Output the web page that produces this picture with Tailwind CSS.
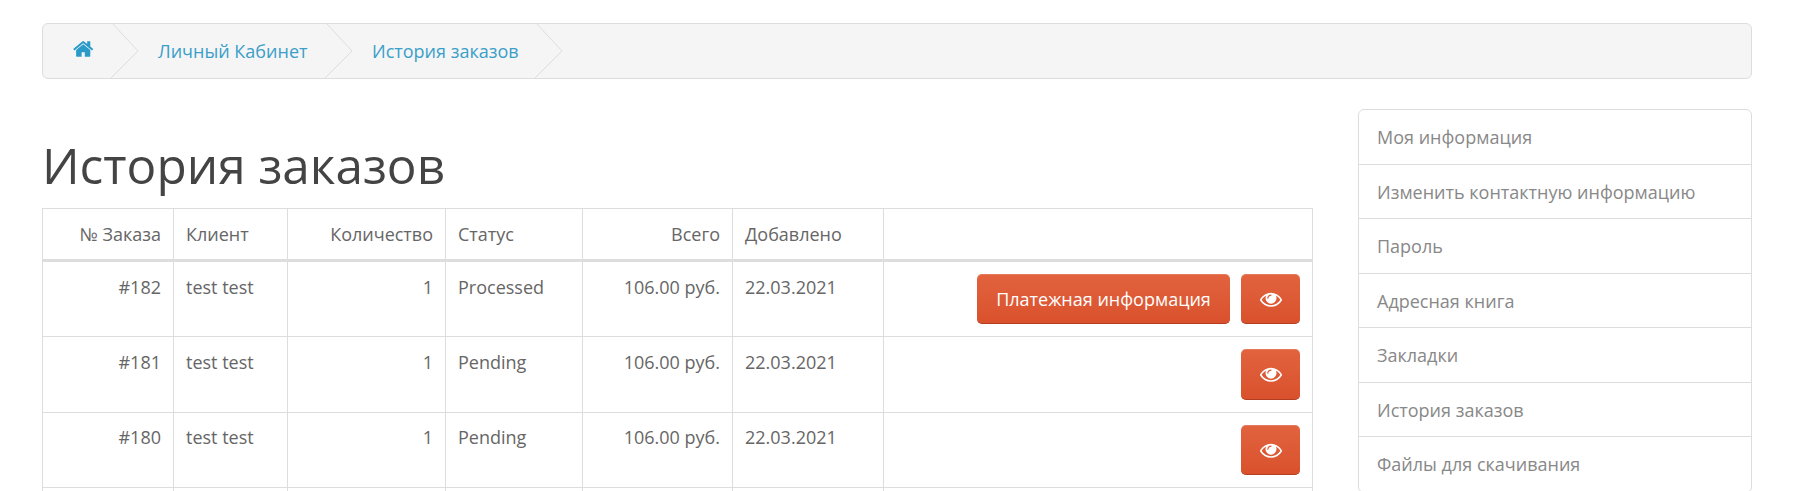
<!DOCTYPE html>
<html lang="ru">
<head>
  <meta charset="UTF-8">
  <meta name="viewport" content="width=device-width, initial-scale=1.0">
  <title>История заказов</title>
  <script src="https://cdn.jsdelivr.net/npm/@tailwindcss/browser@4"></script>
</head>
<body class="bg-white h-[491px] overflow-hidden font-['Open_Sans',sans-serif] text-[18px] leading-[24px] text-[#666]">

  <div class="pt-[23px] pl-[42px] w-[1752px]">
    <!-- breadcrumb -->
    <ul class="flex h-[56px] items-center bg-[#f5f5f5] border border-[#ddd] rounded-[6px] text-[#3a9fc9]">
      <li class="relative h-full flex items-center w-[96px] pl-[30px]">
        <svg class="w-[22px] h-[22px] -mt-[4px] fill-[#2a9ac9]" viewBox="0 0 1792 1792"><path d="M1408 992v480q0 26-19 45t-45 19h-384v-384h-256v384h-384q-26 0-45-19t-19-45v-480q0-1 .5-3t.5-3l575-474 575 474q1 2 1 6zm223-69l-62 74q-8 9-21 11h-3q-13 0-21-7l-692-577-692 577q-12 8-24 7-13-2-21-11l-62-74q-8-10-7-23.5t11-21.5l719-599q32-26 76-26t76 26l244 204v-195q0-14 9-23t23-9h192q14 0 23 9t9 23v408l219 182q10 8 11 21.5t-7 23.5z"/></svg>
        <svg class="absolute top-0 right-0 w-[28px] h-[54px] fill-none stroke-[#ddd]" viewBox="0 0 28 54"><path d="M2 0 L27 27 L0 54"/></svg>
      </li>
      <li class="relative h-full flex items-center w-[214px] pl-[19px]">
        <a href="#">Личный Кабинет</a>
        <svg class="absolute top-0 right-0 w-[28px] h-[54px] fill-none stroke-[#ddd]" viewBox="0 0 28 54"><path d="M2 0 L27 27 L0 54"/></svg>
      </li>
      <li class="relative h-full flex items-center w-[210px] pl-[19px]">
        <a href="#">История заказов</a>
        <svg class="absolute top-0 right-0 w-[28px] h-[54px] fill-none stroke-[#ddd]" viewBox="0 0 28 54"><path d="M2 0 L27 27 L0 54"/></svg>
      </li>
    </ul>

    <div class="flex justify-between items-start">
      <!-- content -->
      <div class="w-[1271px]">
        <h1 class="mt-[59px] text-[49.5px] leading-[54px] font-normal text-[#444] mb-[16px]">История заказов</h1>
        <table class="w-full table-fixed border-collapse border border-[#ddd]">
          <colgroup>
            <col class="w-[131px]"><col class="w-[114px]"><col class="w-[158px]"><col class="w-[137px]"><col class="w-[150px]"><col class="w-[151px]"><col>
          </colgroup>
          <thead>
            <tr class="h-[52px]">
              <td class="border border-[#ddd] border-b-[3px] px-[12px] text-right">№ Заказа</td>
              <td class="border border-[#ddd] border-b-[3px] px-[12px]">Клиент</td>
              <td class="border border-[#ddd] border-b-[3px] px-[12px] text-right">Количество</td>
              <td class="border border-[#ddd] border-b-[3px] px-[12px]">Статус</td>
              <td class="border border-[#ddd] border-b-[3px] px-[12px] text-right">Всего</td>
              <td class="border border-[#ddd] border-b-[3px] px-[12px]">Добавлено</td>
              <td class="border border-[#ddd] border-b-[3px] px-[12px]"></td>
            </tr>
          </thead>
          <tbody>
            <tr class="h-[75px]">
              <td class="border border-[#ddd] px-[12px] pt-[13px] align-top text-right">#182</td>
              <td class="border border-[#ddd] px-[12px] pt-[13px] align-top">test test</td>
              <td class="border border-[#ddd] px-[12px] pt-[13px] align-top text-right">1</td>
              <td class="border border-[#ddd] px-[12px] pt-[13px] align-top">Processed</td>
              <td class="border border-[#ddd] px-[12px] pt-[13px] align-top text-right">106.00 руб.</td>
              <td class="border border-[#ddd] px-[12px] pt-[13px] align-top">22.03.2021</td>
              <td class="border border-[#ddd] p-[12px] align-top">
                <div class="flex justify-end gap-[11px]">
                  <a href="#" class="h-[50px] w-[253px] flex items-center justify-center rounded-[5px] bg-linear-to-b from-[#e2633f] to-[#d9512c] border-b border-[#b33f20] text-white shadow-[inset_0_1px_0_rgba(255,255,255,0.15)]">Платежная информация</a>
                  <a href="#" class="h-[50px] w-[59px] flex items-center justify-center rounded-[5px] bg-linear-to-b from-[#e2633f] to-[#d9512c] border-b border-[#b33f20] shadow-[inset_0_1px_0_rgba(255,255,255,0.15)]">
                    <svg class="w-[22px] h-[22px] fill-white" viewBox="0 0 1792 1792"><path d="M1664 960q-152-236-381-353 61 104 61 225 0 185-131.500 316.500t-316.500 131.500-316.500-131.500-131.500-316.500q0-121 61-225-229 117-381 353 133 205 333.500 326.500t434.500 121.500 434.500-121.500 333.500-326.500zm-720-384q0-20-14-34t-34-14q-125 0-214.500 89.500t-89.500 214.500q0 20 14 34t34 14 34-14 14-34q0-86 61-147t147-61q20 0 34-14t14-34zm848 384q0 34-20 69-140 230-376.500 368.500t-499.500 138.500-499.500-139-376.500-368q-20-35-20-69t20-69q140-229 376.500-368t499.500-139 499.500 139 376.500 368q20 35 20 69z"/></svg>
                  </a>
                </div>
              </td>
            </tr>
            <tr class="h-[76px]">
              <td class="border border-[#ddd] px-[12px] pt-[13px] align-top text-right">#181</td>
              <td class="border border-[#ddd] px-[12px] pt-[13px] align-top">test test</td>
              <td class="border border-[#ddd] px-[12px] pt-[13px] align-top text-right">1</td>
              <td class="border border-[#ddd] px-[12px] pt-[13px] align-top">Pending</td>
              <td class="border border-[#ddd] px-[12px] pt-[13px] align-top text-right">106.00 руб.</td>
              <td class="border border-[#ddd] px-[12px] pt-[13px] align-top">22.03.2021</td>
              <td class="border border-[#ddd] p-[12px] align-top">
                <div class="flex justify-end">
                  <a href="#" class="h-[51px] w-[59px] flex items-center justify-center rounded-[5px] bg-linear-to-b from-[#e2633f] to-[#d9512c] border-b border-[#b33f20] shadow-[inset_0_1px_0_rgba(255,255,255,0.15)]">
                    <svg class="w-[22px] h-[22px] fill-white" viewBox="0 0 1792 1792"><path d="M1664 960q-152-236-381-353 61 104 61 225 0 185-131.500 316.500t-316.500 131.500-316.500-131.500-131.500-316.500q0-121 61-225-229 117-381 353 133 205 333.500 326.500t434.500 121.500 434.500-121.500 333.500-326.500zm-720-384q0-20-14-34t-34-14q-125 0-214.500 89.500t-89.500 214.500q0 20 14 34t34 14 34-14 14-34q0-86 61-147t147-61q20 0 34-14t14-34zm848 384q0 34-20 69-140 230-376.500 368.500t-499.500 138.500-499.500-139-376.500-368q-20-35-20-69t20-69q140-229 376.500-368t499.500-139 499.500 139 376.500 368q20 35 20 69z"/></svg>
                  </a>
                </div>
              </td>
            </tr>
            <tr class="h-[75px]">
              <td class="border border-[#ddd] px-[12px] pt-[12px] align-top text-right">#180</td>
              <td class="border border-[#ddd] px-[12px] pt-[12px] align-top">test test</td>
              <td class="border border-[#ddd] px-[12px] pt-[12px] align-top text-right">1</td>
              <td class="border border-[#ddd] px-[12px] pt-[12px] align-top">Pending</td>
              <td class="border border-[#ddd] px-[12px] pt-[12px] align-top text-right">106.00 руб.</td>
              <td class="border border-[#ddd] px-[12px] pt-[12px] align-top">22.03.2021</td>
              <td class="border border-[#ddd] p-[12px] align-top">
                <div class="flex justify-end">
                  <a href="#" class="h-[50px] w-[59px] flex items-center justify-center rounded-[5px] bg-linear-to-b from-[#e2633f] to-[#d9512c] border-b border-[#b33f20] shadow-[inset_0_1px_0_rgba(255,255,255,0.15)]">
                    <svg class="w-[22px] h-[22px] fill-white" viewBox="0 0 1792 1792"><path d="M1664 960q-152-236-381-353 61 104 61 225 0 185-131.500 316.500t-316.500 131.500-316.500-131.500-131.500-316.500q0-121 61-225-229 117-381 353 133 205 333.500 326.500t434.500 121.500 434.500-121.500 333.500-326.500zm-720-384q0-20-14-34t-34-14q-125 0-214.500 89.500t-89.500 214.500q0 20 14 34t34 14 34-14 14-34q0-86 61-147t147-61q20 0 34-14t14-34zm848 384q0 34-20 69-140 230-376.500 368.500t-499.500 138.500-499.500-139-376.500-368q-20-35-20-69t20-69q140-229 376.500-368t499.500-139 499.500 139 376.500 368q20 35 20 69z"/></svg>
                  </a>
                </div>
              </td>
            </tr>
            <tr class="h-[75px]">
              <td class="border border-[#ddd]"></td><td class="border border-[#ddd]"></td><td class="border border-[#ddd]"></td><td class="border border-[#ddd]"></td><td class="border border-[#ddd]"></td><td class="border border-[#ddd]"></td><td class="border border-[#ddd]"></td>
            </tr>
          </tbody>
        </table>
      </div>

      <!-- sidebar -->
      <div class="w-[394px] mt-[30px] border border-[#ddd] rounded-[6px] text-[#888] leading-[25.5px]">
        <a href="#" class="block px-[18px] pt-[15px] pb-[13px] border-b border-[#ddd]">Моя информация</a>
        <a href="#" class="block px-[18px] pt-[15px] pb-[13px] border-b border-[#ddd]">Изменить контактную информацию</a>
        <a href="#" class="block px-[18px] pt-[15px] pb-[13px] border-b border-[#ddd]">Пароль</a>
        <a href="#" class="block px-[18px] pt-[15px] pb-[13px] border-b border-[#ddd]">Адресная книга</a>
        <a href="#" class="block px-[18px] pt-[15px] pb-[13px] border-b border-[#ddd]">Закладки</a>
        <a href="#" class="block px-[18px] pt-[15px] pb-[13px] border-b border-[#ddd]">История заказов</a>
        <a href="#" class="block px-[18px] pt-[15px] pb-[13px] border-b border-[#ddd]">Файлы для скачивания</a>
      </div>
    </div>
  </div>

</body>
</html>
